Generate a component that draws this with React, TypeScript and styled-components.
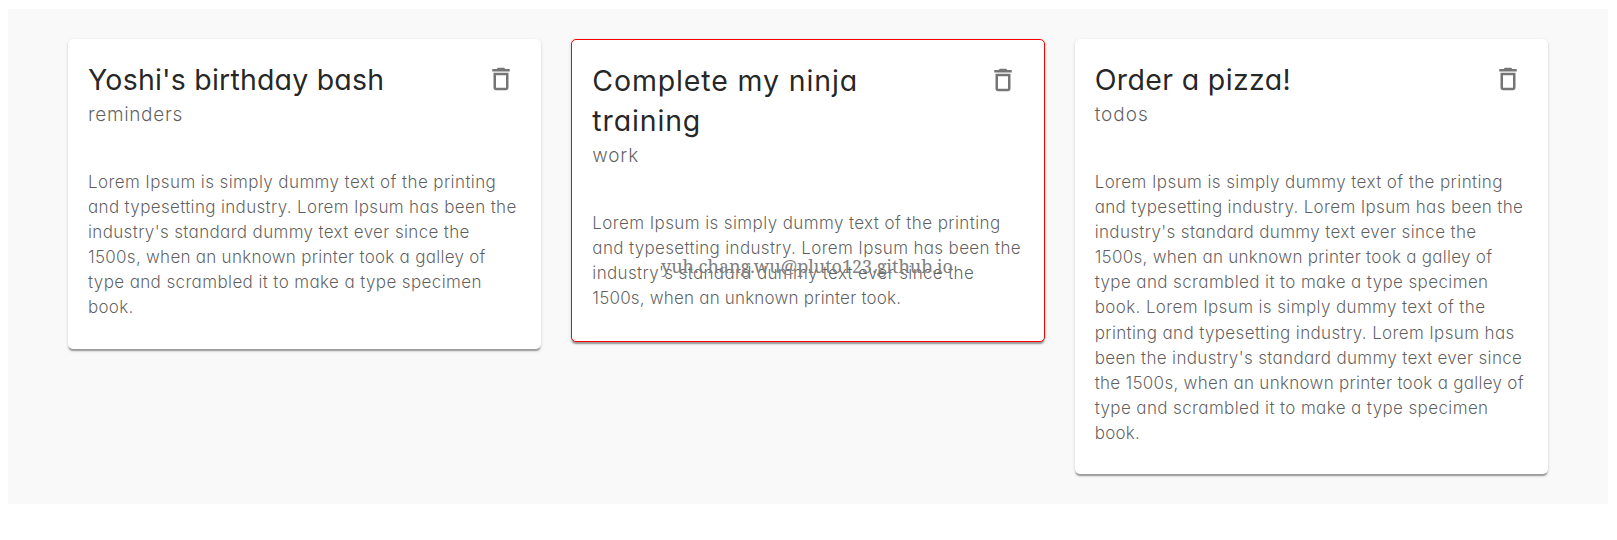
import React from "react";
import styled, { createGlobalStyle } from "styled-components";

const GlobalStyle = createGlobalStyle`
  * { box-sizing: border-box; }
  body {
    margin: 0;
    background: #fff;
    font-family: Inter, Lato, sans-serif;
    font-feature-settings: "cv11";
  }
`;

const Page = styled.div`
  position: relative;
  height: 540px;
  padding: 9px 9px 0 8px;
  overflow: hidden;
`;

const Board = styled.main`
  display: grid;
  grid-template-columns: repeat(3, 1fr);
  align-items: start;
  gap: 30px;
  padding: 30px 60px;
  background: #f9f9f9;
`;

const Card = styled.article<{ $urgent?: boolean }>`
  border: ${(p) => (p.$urgent ? "1px solid #f00" : "0")};
  padding-bottom: ${(p) => (p.$urgent ? "1px" : "0")};
  border-radius: 5px;
  background: #fff;
  box-shadow:
    0 2.5px 1.25px -1.25px rgba(0, 0, 0, 0.2),
    0 1.25px 1.25px 0 rgba(0, 0, 0, 0.14),
    0 1.25px 3.75px 0 rgba(0, 0, 0, 0.12);
`;

const CardHeader = styled.header`
  display: flex;
  align-items: flex-start;
  padding: 21px 20px 19px;
`;

const Heading = styled.div`
  flex: 1;
  min-width: 0;
`;

const Line = styled.span<{ $tracking: number }>`
  display: block;
  white-space: nowrap;
  letter-spacing: ${(p) => p.$tracking}px;
`;

const Title = styled.h2`
  margin: 0;
  font-size: 28.5px;
  font-weight: 400;
  line-height: 40.02px;
  color: rgba(0, 0, 0, 0.87);
`;

const Category = styled.p`
  margin: 0;
  font-size: 19px;
  font-weight: 300;
  line-height: 30px;
  color: rgba(0, 0, 0, 0.64);
`;

const DeleteButton = styled.button<{ $urgent?: boolean }>`
  display: flex;
  flex: none;
  margin: -11px ${(p) => (p.$urgent ? -9 : -10)}px -10px 0;
  padding: 15px;
  border: 0;
  border-radius: 50%;
  background: transparent;
  color: rgba(0, 0, 0, 0.54);
`;

const TrashIcon = styled.svg`
  width: 30px;
  height: 30px;
  fill: currentColor;
`;

const CardBody = styled.div`
  padding: 21.3px 20px 28.7px;
  font-size: 17px;
  font-weight: 300;
  line-height: 25.025px;
  color: rgba(0, 0, 0, 0.64);
`;

const Watermark = styled.div`
  position: absolute;
  top: 254px;
  left: 661px;
  font-family: "Noto Serif", "DejaVu Serif", serif;
  font-size: 18px;
  line-height: 25px;
  white-space: nowrap;
  color: #808080;
`;

type TextLine = [text: string, tracking: number];

interface Note {
  title: TextLine[];
  category: TextLine;
  details: TextLine[];
  urgent?: boolean;
}

const opening: TextLine[] = [
  ["Lorem Ipsum is simply dummy text of the printing", 0.395],
  ["and typesetting industry. Lorem Ipsum has been the", 0.335],
  ["industry's standard dummy text ever since the", 0.345],
];

const middle: TextLine[] = [
  ["1500s, when an unknown printer took a galley of", 0.265],
  ["type and scrambled it to make a type specimen", 0.375],
];

const notes: Note[] = [
  {
    title: [["Yoshi's birthday bash", 0.2]],
    category: ["reminders", 0.68],
    details: [...opening, ...middle, ["book.", 0.266]],
  },
  {
    title: [["Complete my ninja", 0.86], ["training", 0.86]],
    category: ["work", 0.8],
    details: [...opening, ["1500s, when an unknown printer took.", 0.189]],
    urgent: true,
  },
  {
    title: [["Order a pizza!", 0.36]],
    category: ["todos", 0.95],
    details: [
      ...opening,
      ...middle,
      ["book. Lorem Ipsum is simply dummy text of the", 0.38],
      ["printing and typesetting industry. Lorem Ipsum has", 0.36],
      ["been the industry's standard dummy text ever since", 0.332],
      ["the 1500s, when an unknown printer took a galley of", 0.28],
      middle[1],
      ["book.", 0.266],
    ],
  },
];

const Lines = ({ lines }: { lines: TextLine[] }) => (
  <>
    {lines.map(([text, tracking], i) => (
      <Line key={i} $tracking={tracking}>{text}</Line>
    ))}
  </>
);

const NoteCard = ({ note }: { note: Note }) => (
  <Card $urgent={note.urgent}>
    <CardHeader>
      <Heading>
        <Title><Lines lines={note.title} /></Title>
        <Category><Lines lines={[note.category]} /></Category>
      </Heading>
      <DeleteButton $urgent={note.urgent} aria-label="Delete note">
        <TrashIcon viewBox="0 0 24 24">
          <path d="M6 19c0 1.1.9 2 2 2h8c1.1 0 2-.9 2-2V7H6v12zM8 9h8v10H8V9zm7.5-5l-1-1h-5l-1 1H5v2h14V4h-3.5z" />
        </TrashIcon>
      </DeleteButton>
    </CardHeader>
    <CardBody><Lines lines={note.details} /></CardBody>
  </Card>
);

export default function App() {
  return (
    <Page>
      <GlobalStyle />
      <Board>
        {notes.map((note) => (
          <NoteCard key={note.category[0]} note={note} />
        ))}
      </Board>
      <Watermark>yuh.chang.wu@pluto123.github.io</Watermark>
    </Page>
  );
}
